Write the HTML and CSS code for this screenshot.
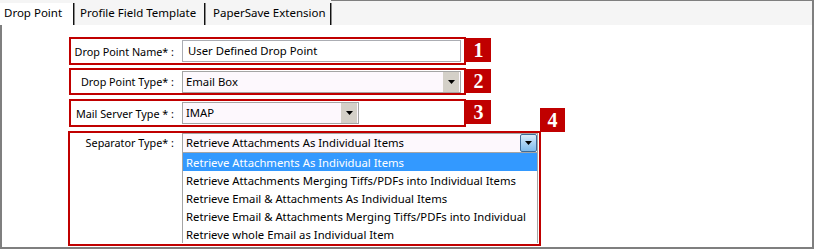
FILE: index.html
```html
<!DOCTYPE html>
<html lang="en">
<head>
    <meta charset="UTF-8">
    <title>Drop Point Settings</title>
    <link rel="stylesheet" href="styles.css">
</head>
<body>
<div class="window">
    <div class="tabs">
        <div class="tab tab-first">Drop Point</div>
        <div class="tab tab-second">Profile Field Template</div>
        <div class="tab tab-third">PaperSave Extension</div>
        <div class="tab-fill"></div>
    </div>

    <div class="panel">
        <div class="row">
            <div class="field">
                <label class="lbl">Drop Point Name* :</label>
                <div class="textbox">User Defined Drop Point</div>
            </div>
            <span class="badge">1</span>
        </div>

        <div class="row row-2">
            <div class="field field-short">
                <label class="lbl">Drop Point Type* :</label>
                <div class="combo combo-wide">
                    <span class="combo-text">Email Box</span>
                    <span class="combo-btn">
                        <svg width="7" height="4" viewBox="0 0 7 4"><path d="M0 0h7L3.5 4z" fill="#000"/></svg>
                    </span>
                </div>
            </div>
            <span class="badge">2</span>
        </div>

        <div class="row row-3">
            <div class="field">
                <label class="lbl">Mail Server Type * :</label>
                <div class="combo combo-narrow">
                    <span class="combo-text">IMAP</span>
                    <span class="combo-btn">
                        <svg width="7" height="4" viewBox="0 0 7 4"><path d="M0 0h7L3.5 4z" fill="#000"/></svg>
                    </span>
                </div>
            </div>
            <span class="badge">3</span>
        </div>

        <div class="field field-list">
            <span class="badge badge-top">4</span>
            <label class="lbl lbl-list">Separator Type* :</label>
            <div class="combo-wrap">
                <div class="combo combo-open">
                    <span class="combo-text">Retrieve Attachments As Individual Items</span>
                    <span class="combo-btn btn-blue">
                        <svg width="7" height="4" viewBox="0 0 7 4"><path d="M0 0h7L3.5 4z" fill="#000"/></svg>
                    </span>
                </div>
                <ul class="options">
                    <li class="selected">Retrieve Attachments As Individual Items</li>
                    <li>Retrieve Attachments Merging Tiffs/PDFs into Individual Items</li>
                    <li>Retrieve Email &amp; Attachments As Individual Items</li>
                    <li>Retrieve Email &amp; Attachments Merging Tiffs/PDFs into Individual</li>
                    <li>Retrieve whole Email as Individual Item</li>
                </ul>
            </div>
        </div>
    </div>
</div>
</body>
</html>
```

FILE: styles.css
```css
body {
    margin: 0;
    background: #fff;
    font-family: "Noto Sans", "DejaVu Sans", sans-serif;
    color: #000;
}
.window {
    width: 814px;
    height: 249px;
    display: flex;
    flex-direction: column;
}

/* tab strip */
.tabs {
    height: 25px;
    display: flex;
    background: #f5f5f5;
}
.tab {
    box-sizing: border-box;
    margin-top: 3px;
    height: 22px;
    padding-top: 3px;
    font-size: 11.5px;
    line-height: 14px;
    border-right: 1px solid #111;
    box-shadow: 1px 0 0 #8a8a8a;
    white-space: nowrap;
}
.tab-first {
    width: 74px;
    padding-left: 4px;
    background: #fff;
}
.tab-second {
    width: 131px;
    padding-left: 6px;
}
.tab-third {
    width: 126px;
    padding-left: 8px;
}
.tab-fill {
    flex: 1;
    border-top: 1px solid #7f7f7f;
    border-right: 2px solid #7f7f7f;
}

/* panel */
.panel {
    flex: 1;
    box-sizing: border-box;
    border-left: 2px solid #7f7f7f;
    border-right: 2px solid #7f7f7f;
    border-bottom: 2px solid #7f7f7f;
    padding: 12px 0 0 67px;
}
.row {
    display: flex;
    align-items: flex-start;
}
.row-2 {
    margin-top: 3px;
}
.row-3 {
    margin-top: 4px;
}
.field {
    box-sizing: border-box;
    width: 397px;
    height: 28px;
    border: 2px solid #c00000;
    display: flex;
    align-items: center;
}
.field-short {
    height: 27px;
}
.lbl {
    width: 103px;
    margin-right: 8px;
    text-align: right;
    font-size: 10.8px;
    white-space: nowrap;
}
.badge {
    width: 25px;
    height: 24px;
    margin-top: 1px;
    background: #c00000;
    color: #fff;
    font-family: "Liberation Serif", serif;
    font-weight: bold;
    font-size: 20px;
    line-height: 24px;
    text-align: center;
}

.textbox {
    box-sizing: border-box;
    width: 279px;
    height: 22px;
    border: 1px solid #abadb3;
    padding-left: 5px;
    font-size: 11.3px;
    line-height: 20px;
    background: #fff;
}
.combo {
    box-sizing: border-box;
    height: 22px;
    border: 1px solid #a5a5a5;
    background: #fdf8fd;
    display: flex;
    font-size: 11.3px;
}
.combo-wide {
    width: 279px;
}
.combo-narrow {
    width: 177px;
}
.combo-text {
    flex: 1;
    padding-left: 3px;
    line-height: 20px;
    white-space: nowrap;
}
.combo-btn {
    width: 16px;
    margin: 0 1px 0 0;
    background: #d4d0c8;
    display: flex;
    align-items: center;
    justify-content: center;
}

/* open drop-down */
.field-list {
    position: relative;
    width: 473px;
    height: 115px;
    margin: 4px 0 0 -1px;
    align-items: flex-start;
}
.badge-top {
    position: absolute;
    right: -26px;
    top: -25px;
    margin: 0;
}
.lbl-list {
    width: 104px;
    line-height: 20px;
}
.combo-wrap {
    width: 356px;
    height: 111px;
    overflow: hidden;
}
.combo-open {
    height: 20px;
}
.combo-open .combo-text {
    line-height: 18px;
}
.btn-blue {
    box-sizing: border-box;
    width: 17px;
    margin: 0;
    border: 1px solid #3c6a98;
    border-radius: 2px;
    background: linear-gradient(#dbeefc, #a9d2f3 50%, #7fbbec);
}
.options {
    list-style: none;
    margin: 0;
    padding: 0;
    border-left: 1px solid #a5a5a5;
    border-right: 1px solid #a5a5a5;
    background: #fff;
    font-size: 11.3px;
}
.options li {
    height: 18px;
    line-height: 19px;
    padding-left: 3px;
    white-space: nowrap;
}
.options .selected {
    background: #3399ff;
    color: #fff;
}
```
